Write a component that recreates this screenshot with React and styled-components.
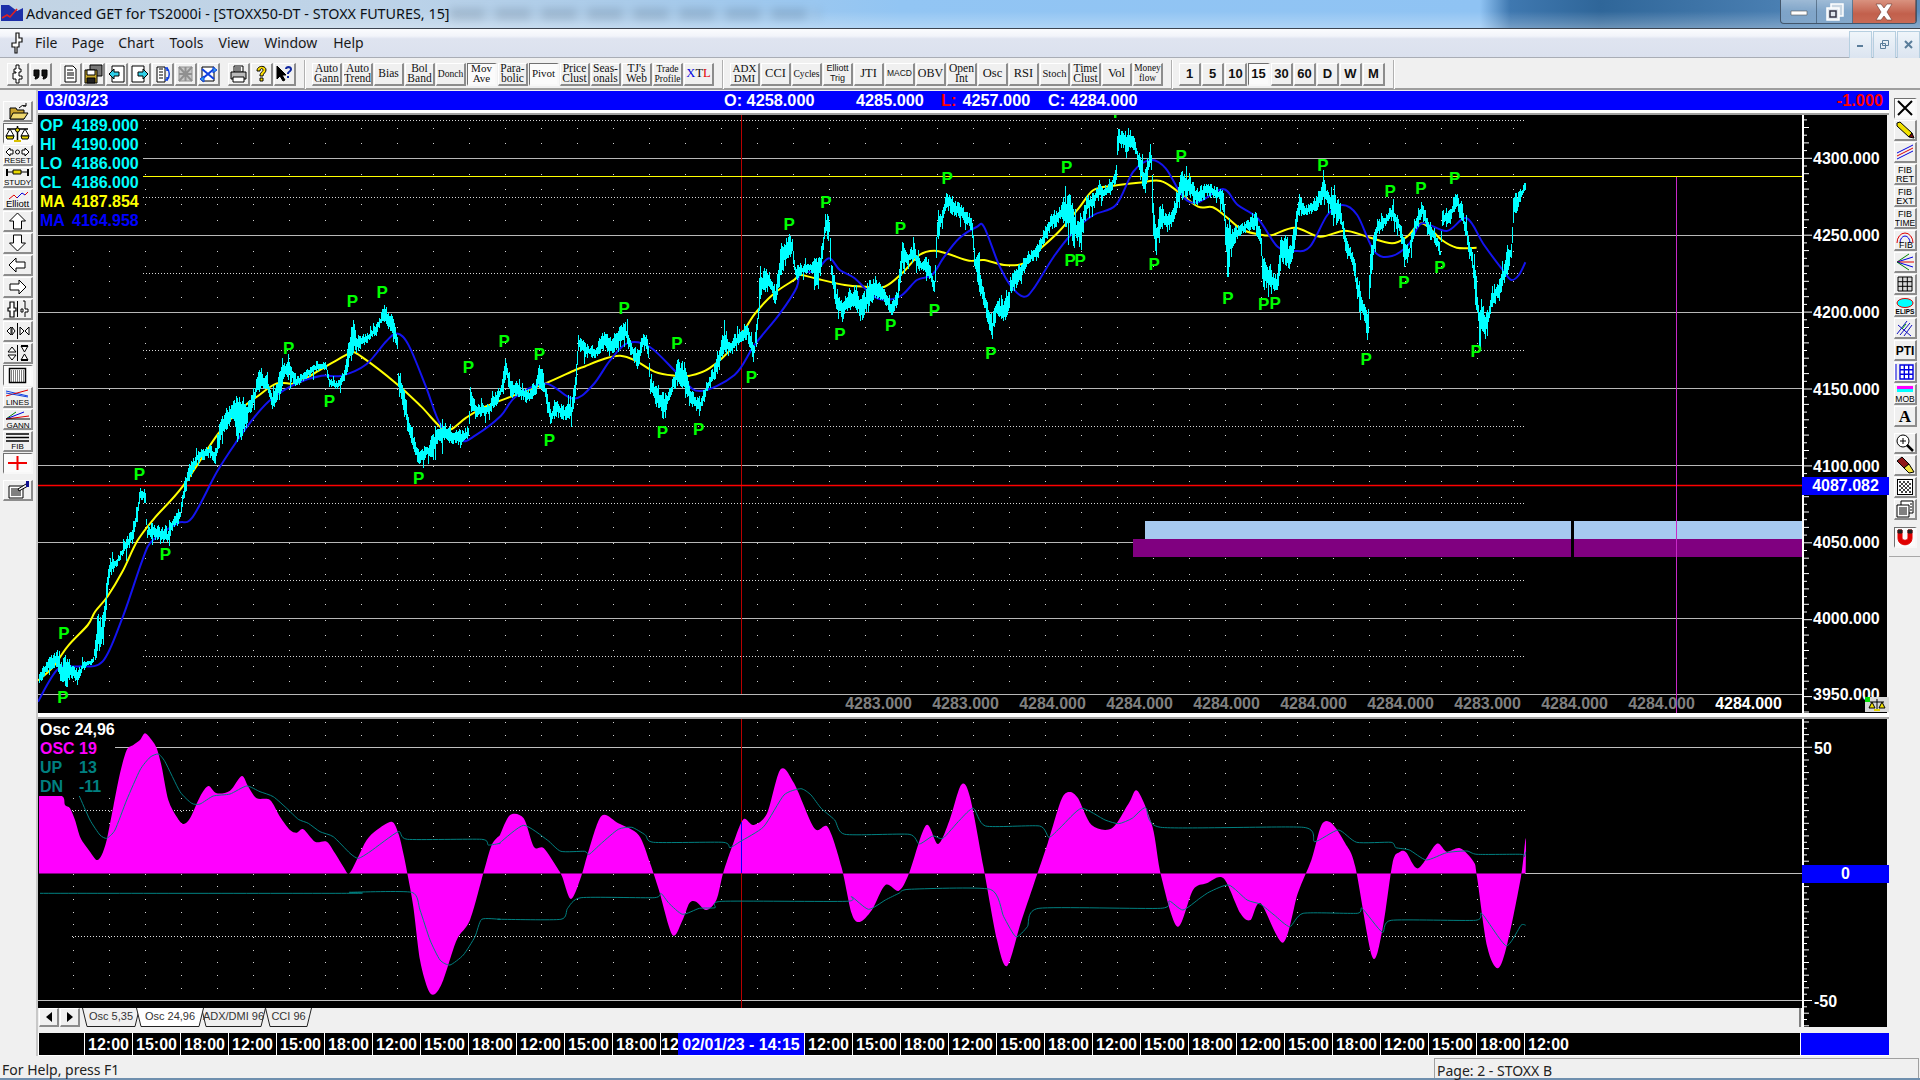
import React from "react";
import styled, { createGlobalStyle } from "styled-components";

/* ---------- digitised chart data (source px -> page coordinates) ---------- */
const fromA = (x) => 38 + x / 2.01;
const fromAy = (y) => 115 + y / 2.608;
const fromB = (x) => 800 + x / 2.01;
const fromBy = (y) => 115 + y / 3;
const fromOscA = ([x, y]) => [x / 3, 680 + y / 3];
const fromOscB = ([x, y]) => [500 + x / 1.479, 720 + y / 3];

const cyanA = [[0,1450,1490],[15,1425,1460],[30,1400,1445],[38,1390,1440],[44,1430,1480],[55,1405,1495],[65,1430,1470],[80,1445,1480],[90,1425,1450],[110,1415,1430],[118,1300,1420],[130,1300,1400],[136,1220,1300],[142,1150,1220],[155,1160,1185],[170,1120,1150],[190,1065,1120],[197,1020,1080],[205,965,1015],[215,975,1010],[218,1070,1110],[235,1060,1110],[260,1085,1120],[270,1040,1090],[285,1030,1060],[290,975,1020],[300,915,970],[320,875,910],[345,855,895],[355,870,920],[365,785,865],[390,740,800],[407,705,890],[415,745,830],[430,720,770],[445,655,720],[460,680,720],[470,730,770],[485,660,745],[495,640,690],[505,635,700],[520,680,710],[540,660,690],[560,640,670],[578,640,670],[585,680,715],[600,690,720],[615,660,700],[632,510,640],[640,570,620],[660,570,600],[680,540,570],[697,490,540],[712,520,590],[722,570,620],[723,650,720],[735,700,790],[745,790,850],[760,850,900],[767,870,925],[780,860,890],[792,830,915],[800,805,880],[815,790,860],[830,820,860],[848,815,870],[865,810,850],[868,685,780],[880,750,795],[905,750,785],[915,720,775],[930,700,740],[940,620,700],[950,680,740],[965,700,740],[985,715,755],[1000,690,730],[1005,650,720],[1012,655,720],[1020,700,760],[1030,760,820],[1040,735,790],[1060,760,800],[1072,740,800],[1080,665,740],[1085,570,620],[1100,590,635],[1120,600,640],[1135,555,620],[1150,575,625],[1180,535,600],[1195,590,640],[1205,610,675],[1215,565,610],[1225,570,620],[1230,670,740],[1245,700,770],[1258,720,805],[1270,710,740],[1285,625,710],[1300,640,730],[1310,710,760],[1330,730,790],[1345,690,720],[1360,640,700],[1378,545,630],[1390,590,630],[1410,555,600],[1425,540,590],[1438,600,650],[1447,500,540],[1450,385,500],[1470,410,450],[1482,450,505],[1493,330,420],[1505,320,400],[1515,310,360],[1522,390,440]];
const cyanB = [[0,445,490],[20,440,470],[35,415,535],[45,380,440],[50,295,360],[58,295,360],[62,430,500],[72,510,590],[85,560,625],[95,520,590],[110,510,590],[120,540,620],[135,500,600],[150,480,550],[165,510,560],[182,560,605],[195,520,580],[205,370,480],[215,410,450],[228,380,450],[240,430,470],[258,420,490],[270,500,555],[275,290,395],[285,280,330],[295,220,290],[310,250,310],[325,265,320],[345,310,350],[350,390,480],[360,440,540],[372,540,600],[385,600,680],[395,550,600],[410,550,630],[420,520,590],[422,480,545],[440,440,510],[460,410,450],[475,380,440],[490,340,390],[505,290,350],[525,265,320],[540,185,400],[548,240,410],[555,300,390],[565,280,410],[575,240,300],[590,230,280],[600,190,260],[612,210,260],[625,180,240],[635,145,200],[638,25,110],[650,55,100],[660,30,120],[672,70,110],[682,110,190],[692,150,245],[705,90,150],[710,265,390],[715,330,415],[725,260,350],[738,290,360],[750,260,320],[768,155,260],[780,165,250],[795,215,280],[815,200,250],[835,210,250],[850,225,290],[858,290,520],[868,330,410],[880,330,370],[900,310,350],[915,280,350],[925,340,400],[930,420,540],[945,450,530],[958,480,540],[965,350,470],[985,370,470],[995,300,400],[1002,225,310],[1015,270,300],[1030,260,300],[1052,185,270],[1062,230,280],[1072,200,340],[1085,260,320],[1095,350,420],[1110,400,460],[1120,490,560],[1135,570,640],[1141,600,705],[1145,370,530],[1160,310,370],[1180,290,330],[1190,260,320],[1205,320,360],[1215,350,470],[1222,400,440],[1235,300,360],[1250,255,310],[1262,310,370],[1275,340,390],[1287,400,430],[1290,280,340],[1305,280,340],[1317,220,280],[1330,260,340],[1340,330,390],[1350,390,480],[1356,450,545],[1365,555,680],[1380,590,670],[1390,515,580],[1405,490,560],[1420,400,480],[1430,385,430],[1433,240,325],[1445,225,270],[1458,200,225]];
const yellowA = [[0,1475],[30,1440],[60,1385],[100,1330],[115,1295],[140,1255],[170,1190],[200,1110],[235,1050],[290,970],[360,835],[400,775],[440,735],[480,700],[520,700],[560,670],[600,640],[630,620],[650,630],[720,700],[770,760],[810,815],[830,820],[860,790],[900,760],[960,730],[1020,700],[1080,665],[1100,655],[1140,635],[1170,628],[1200,640],[1240,670],[1280,680],[1310,680],[1350,660],[1400,600],[1440,520],[1480,465],[1520,430]];
const yellowB = [[0,480],[30,490],[90,510],[130,515],[170,515],[205,475],[240,420],[270,407],[300,418],[340,437],[370,435],[410,450],[450,445],[480,405],[520,350],[560,280],[590,225],[630,212],[680,203],[725,198],[760,230],[800,275],[830,277],[860,310],[890,345],[930,360],[950,360],[995,338],[1045,365],[1095,347],[1140,365],[1190,385],[1220,365],[1250,325],[1290,375],[1320,398],[1360,398]];
const blueA = [[0,1530],[40,1445],[80,1438],[130,1425],[170,1310],[210,1160],[230,1110],[280,1065],[310,1050],[360,930],[400,850],[440,780],[470,740],[520,700],[570,680],[610,680],[660,650],[700,590],[722,570],[745,600],[780,710],[810,810],[850,850],[880,835],[930,785],[960,735],[1020,700],[1075,740],[1115,705],[1150,640],[1185,595],[1230,605],[1290,680],[1330,720],[1400,678],[1440,600],[1490,520],[1525,450]];
const blueB = [[0,470],[30,470],[58,430],[80,465],[110,490],[155,550],[200,545],[235,495],[265,480],[290,425],[320,370],[355,336],[370,336],[400,450],[425,515],[450,545],[470,520],[510,425],[550,350],[590,300],[635,270],[670,170],[705,135],[735,160],[770,245],[800,262],[850,222],[880,270],[920,310],[960,395],[995,408],[1025,395],[1060,300],[1090,270],[1120,300],[1155,410],[1190,423],[1225,385],[1250,325],[1300,348],[1340,310],[1375,390],[1415,470],[1430,495],[1445,480],[1458,442]];
const pivotsA = [[52,1352],[50,1518],[204,936],[256,1145],[504,608],[586,745],[632,484],[692,462],[765,948],[865,658],[937,590],[1008,624],[1028,847],[1178,503],[1255,828],[1284,595],[1328,818],[1434,682],[1510,283]];
const pivotsB = [[52,262],[80,656],[202,340],[182,630],[296,188],[270,584],[384,714],[536,156],[543,436],[563,436],[712,446],[766,122],[860,548],[932,568],[955,565],[1051,150],[1138,732],[1186,228],[1248,218],[1316,188],[1214,500],[1286,456],[1359,708]];
const oscA = [[117,348],[185,348],[195,375],[210,385],[225,420],[240,470],[255,495],[270,515],[290,540],[305,525],[320,480],[340,380],[360,280],[380,210],[400,195],[420,180],[435,160],[455,180],[470,205],[485,260],[505,360],[530,410],[550,432],[570,415],[600,350],[625,318],[650,340],[690,332],[725,288],[745,320],[770,355],[810,360],[840,410],[870,450],[890,458],[910,448],[945,485],[980,485],[1005,520],[1030,560],[1048,580],[1075,530],[1100,480],[1130,450],[1175,425],[1195,460],[1210,520],[1222,580],[1240,680],[1260,840],[1285,930],[1305,942],[1330,900],[1370,780],[1410,720],[1450,580],[1475,495],[1500,465]];
const oscB = [[0,345],[15,285],[35,295],[50,380],[65,385],[85,445],[92,470],[105,537],[120,470],[130,400],[150,288],[175,310],[205,345],[222,430],[235,510],[255,645],[270,600],[280,550],[290,545],[305,570],[320,540],[330,460],[345,370],[360,298],[375,315],[395,280],[415,148],[435,190],[465,325],[485,322],[505,440],[520,580],[532,606],[550,570],[570,495],[590,512],[605,460],[630,316],[648,372],[665,300],[682,195],[695,230],[715,440],[735,660],[750,738],[770,610],[790,490],[810,370],[830,240],[842,216],[855,235],[875,315],[905,325],[930,250],[943,213],[965,320],[978,470],[1002,620],[1025,510],[1045,490],[1070,475],[1095,580],[1110,600],[1125,550],[1158,668],[1180,520],[1200,420],[1215,315],[1230,310],[1250,370],[1265,440],[1290,710],[1305,630],[1320,430],[1330,397],[1340,397],[1358,445],[1385,372],[1400,395],[1420,385],[1440,425],[1445,470],[1460,680],[1476,745],[1490,670],[1510,470],[1517,355],[1517,460]];
const upA = [[238,348],[270,420],[300,465],[320,475],[345,450],[380,360],[420,270],[450,232],[475,222],[495,245],[540,335],[575,370],[600,372],[640,348],[690,342],[740,318],[780,335],[820,350],[860,385],[895,418],[925,430],[960,455],[1000,470],[1050,520],[1075,535],[1110,515],[1195,455],[1222,478],[1445,478],[1465,495],[1500,490]];
const upB = [[0,368],[35,316],[70,360],[90,394],[125,394],[132,403],[150,370],[175,328],[195,322],[215,345],[227,367],[330,367],[340,383],[355,365],[390,320],[420,225],[445,206],[460,225],[475,265],[495,300],[510,343],[605,343],[620,372],[640,348],[655,355],[680,300],[700,265],[718,318],[798,318],[812,352],[830,320],[860,265],[895,300],[915,311],[935,295],[955,263],[977,322],[1188,322],[1205,365],[1240,330],[1267,367],[1318,367],[1325,383],[1345,390],[1370,420],[1400,398],[1430,393],[1445,403],[1510,403],[1515,410],[1517,395]];
const dnA = [[120,640],[1050,640],[1050,637],[1235,637],[1260,690],[1290,780],[1320,840],[1350,855],[1390,825],[1425,770],[1445,718],[1500,718]];
const dnB = [[0,598],[90,598],[100,565],[120,533],[228,533],[238,520],[250,550],[270,583],[295,565],[318,563],[328,544],[512,544],[520,530],[545,568],[570,540],[590,520],[605,508],[725,508],[745,590],[763,650],[780,620],[797,565],[977,565],[990,543],[1010,570],[1035,535],[1050,515],[1078,495],[1105,540],[1125,553],[1145,585],[1168,620],[1188,580],[1268,580],[1275,565],[1305,637],[1318,601],[1443,601],[1452,580],[1488,677],[1510,616],[1517,616]];

const rnd = (i) => { const v = Math.sin(i * 12.9898) * 43758.5453; return v - Math.floor(v); };
const f1 = (n) => n.toFixed(1);
/* a curve through the points (Catmull-Rom), k = how round the corners are */
const curve = (pts, k = 1) => {
  let d = `M${f1(pts[0][0])} ${f1(pts[0][1])}`;
  for (let i = 0; i < pts.length - 1; i++) {
    const p0 = pts[Math.max(0, i - 1)], p1 = pts[i], p2 = pts[i + 1], p3 = pts[Math.min(pts.length - 1, i + 2)];
    const a = [p1[0] + ((p2[0] - p0[0]) / 6) * k, p1[1] + ((p2[1] - p0[1]) / 6) * k];
    const b = [p2[0] - ((p3[0] - p1[0]) / 6) * k, p2[1] - ((p3[1] - p1[1]) / 6) * k];
    d += `C${f1(a[0])} ${f1(a[1])} ${f1(b[0])} ${f1(b[1])} ${f1(p2[0])} ${f1(p2[1])}`;
  }
  return d;
};
const linePts = (a, b) => [...a.map(([x, y]) => [fromA(x), fromAy(y)]), ...b.map(([x, y]) => [fromB(x), fromBy(y)])];
const oscPts = (a, b) => [...a.map(fromOscA), ...b.map(fromOscB)];

const barsPath = () => {
  const env = [...cyanA.map(([x, t, b]) => [fromA(x), fromAy(t), fromAy(b)]), ...cyanB.map(([x, t, b]) => [fromB(x), fromBy(t), fromBy(b)])];
  let d = "", k = 0;
  for (let x = 39; x <= env[env.length - 1][0]; x += 1) {
    while (k < env.length - 2 && env[k + 1][0] < x) k++;
    const [x0, t0, b0] = env[k];
    const [x1, t1, b1] = env[k + 1];
    const f = Math.min(1, Math.max(0, (x - x0) / Math.max(0.01, x1 - x0)));
    const t = t0 + (t1 - t0) * f;
    const b = b0 + (b1 - b0) * f;
    const s = b - t;
    let top = t + rnd(x) * s * 0.36;
    let bot = b - rnd(x + 7) * s * 0.36;
    if (rnd(x * 3 + 1) > 0.94) top -= 3 + rnd(x + 3) * 7;
    if (rnd(x * 5 + 2) > 0.94) bot += 3 + rnd(x + 5) * 7;
    d += `M${x + 0.5} ${Math.round(top)}V${Math.round(bot)}`;
  }
  return d;
};

const priceLineY = [158.5, 235.5, 312.5, 388.5, 465.5, 542.5, 618.5, 694.5];
const priceDotY = [120.5, 197.5, 273.5, 350.5, 426.5, 503.5, 580.5, 656.5];
const colX = Array.from({ length: 41 }, (_, i) => 73 + 36 * i);
const dots = (y0, step, y1) => {
  let d = "";
  colX.forEach((x) => { for (let y = y0; y < y1; y += step) d += `M${x} ${Math.round(y) + 0.5}h1`; });
  return d;
};

/* ---------- global ---------- */
const Global = createGlobalStyle`
  html, body { margin: 0; padding: 0; background: #f0f0f0; }
  * { box-sizing: border-box; }
`;

const Screen = styled.div`
  width: 1920px; height: 1080px; display: flex; flex-direction: column;
  overflow: hidden; background: #f0f0f0; font-family: "Liberation Sans", Arial, sans-serif;
`;

/* ---------- title bar ---------- */
const TitleBar = styled.header`
  position: relative; height: 29px; flex: none; display: flex; align-items: flex-start;
  border-bottom: 1px solid #3c4450;
  background: linear-gradient(90deg, #c3d4e4 0, #bdd3e8 380px, #a9cbea 640px, #92c5f3 900px, #8fc3f3 1480px, #3f78b0 1510px, #2f6699 1600px, #4a7fb2 1780px, #5c8cba 1920px);
`;
const TitleGlow = styled.div`
  position: absolute; inset: 0; background: linear-gradient(180deg, rgba(255,255,255,0) 40%, rgba(255,255,255,.28) 100%);
`;
const TitleSmear = styled.div`
  position: absolute; left: 450px; top: 8px; width: 370px; height: 12px; filter: blur(4px); opacity: .24;
  background: repeating-linear-gradient(90deg, #56697c 0 34px, #a3bdd4 34px 46px);
`;
const AppLogo = styled.svg`
  position: relative; width: 22px; height: 18px; margin: 4px 3px 0 1px;
`;
const TitleText = styled.div`
  position: relative; font: 14.35px/28px "Noto Sans", sans-serif; color: #0c1015; white-space: nowrap;
`;
const WindowButtons = styled.div`
  position: relative; margin-left: auto; margin-right: 3px; display: flex; height: 24px;
  border: 1px solid #42566b; border-top: 0; border-radius: 0 0 4px 4px; overflow: hidden;
`;
const WinBtn = styled.div`
  width: ${(p) => p.$w}px; display: flex; align-items: center; justify-content: center;
  background: ${(p) => p.$close ? "linear-gradient(180deg,#d9927f,#c2604c 60%,#c96a55)" : "linear-gradient(180deg,rgba(255,255,255,.45),rgba(255,255,255,.12))"};
  border-right: 1px solid rgba(40,60,80,.5);
`;

/* ---------- menu ---------- */
const MenuBar = styled.nav`
  height: 29px; flex: none; display: flex; align-items: center; padding-left: 10px;
  background: linear-gradient(180deg, #fbfcfe 0, #f2f4fa 25%, #dfe4f0 35%, #dbe1ee 100%);
  border-bottom: 1px solid #a9adb5;
`;
const MenuLogo = styled.svg`
  margin-right: 10px; flex: none;
`;
const MenuItem = styled.span`
  font: 14px/28px "Noto Sans", sans-serif; color: #1a1a1a; margin-right: ${(p) => p.$gap}px;
`;
const MdiGroup = styled.div`
  margin-left: auto; display: flex; gap: 1px; height: 28px; margin-top: 3px;
`;
const MdiBtn = styled.div`
  width: 23px; display: flex; align-items: center; justify-content: center;
  border: 1px solid #b6cfe0; background: linear-gradient(180deg,#eff5fa,#dbe4f0);
`;

/* ---------- top toolbar ---------- */
const ToolBar = styled.div`
  height: 32px; flex: none; display: flex; align-items: center; gap: 8px; padding: 2px 0 0 7px;
  background: #f0f0f0; border-bottom: 2px solid #9e9e9e;
`;
const ToolGroup = styled.div`
  display: flex; gap: 1px;
`;
const Sep = styled.i`
  width: 2px; height: 29px; margin-right: -2px; border-left: 1px solid #b0b0b0; border-right: 1px solid #fff;
`;
const RaisedBtn = styled.div`
  display: flex; align-items: center; justify-content: center; flex: none; padding: 0; overflow: hidden;
  background: ${(p) => (p.$on ? "#fbfbfb" : "#f0f0f0")};
  border-style: solid; border-width: 1px 2px 2px 1px;
  border-color: ${(p) => (p.$on ? "#707070 #f8f8f8 #f8f8f8 #707070" : "#ffffff #8c8c8c #8c8c8c #ffffff")};
`;
const IconBtn = styled(RaisedBtn)`
  width: 22px; height: 23px;
`;
const TextBtn = styled(RaisedBtn)`
  width: 30px; height: 23px; white-space: pre-line; text-align: center; color: #111;
  font: ${(p) => p.$size || 11.5}px/9.5px ${(p) => (p.$sans ? '"Liberation Sans", sans-serif' : '"Liberation Serif", serif')};
`;
const NumBtn = styled(RaisedBtn)`
  width: 22px; height: 23px; font: bold 13px/1 "Liberation Sans", sans-serif; color: #111;
`;
const RedL = styled.span`color: #e00000;`;
const BlueX = styled.span`color: #0000e0;`;

/* ---------- workspace ---------- */
const Workspace = styled.div`
  flex: 1; display: flex; min-height: 0;
`;
const LeftBar = styled.aside`
  width: 38px; flex: none; display: flex; flex-direction: column; padding: 11px 0 0 3px; gap: 1px;
  border-right: 2px solid #c8c8c8;
`;
const RightBar = styled.aside`
  width: 31px; flex: none; display: flex; flex-direction: column; padding: 8px 0 0 5px; gap: 1px;
`;
const SideBtn = styled(RaisedBtn)`
  width: ${(p) => p.$w}px; height: 21px; margin-top: ${(p) => p.$mt || 0}px;
`;
const RightRule = styled.div`
  height: 1px; width: 31px; margin: 7px 0 0 -5px; background: #a8a8a8;
`;
const Main = styled.main`
  width: 1851px; flex: none; display: flex; flex-direction: column; padding-top: 1px;
`;

const QuoteBar = styled.div`
  height: 19px; flex: none; background: #0000ff; color: #fff; display: grid;
  grid-template-columns: 686px 132px 85px 107px 1fr auto; align-items: center;
  font: bold 16.3px/19px "Liberation Sans", sans-serif; padding-right: 6px;
`;
const QuoteDate = styled.span`padding-left: 7px;`;
const QuoteRed = styled.span`color: #ff0000;`;
const QuoteValue = styled.span`margin-left: 6px;`;

const TopRule = styled.div`
  height: 5px; flex: none; border-bottom: 2px solid #a0a0a0; background: #fff;
`;
const PriceRow = styled.section`
  display: flex; height: 598px; flex: none;
`;
const ChartPane = styled.div`
  position: relative; width: 1764px; height: ${(p) => p.$h}px; background: #000; flex: none; overflow: hidden;
`;
const ChartSvg = styled.svg`
  display: block; position: absolute; inset: 0; width: 100%; height: 100%;
`;
const AxisPane = styled.div`
  position: relative; width: 85px; height: ${(p) => p.$h}px; background: #000; flex: none;
`;
const AxisLabel = styled.text`
  font: bold 16px "Liberation Sans", sans-serif; fill: #fff;
`;
const PivotMark = styled.text`
  font: bold 17px "Liberation Sans", sans-serif; fill: #00ff00; text-anchor: middle;
`;
const Legend = styled.div`
  position: absolute; left: 0; top: 0; width: ${(p) => p.$w}px; height: ${(p) => p.$h}px; background: #000;
  padding: 1px 0 0 2px; font: bold 16px/19px "Liberation Sans", sans-serif;
`;
const LegendRow = styled.div`
  display: grid; grid-template-columns: ${(p) => p.$col}px auto; color: ${(p) => p.$c}; white-space: nowrap;
`;
const ValueStrip = styled.div`
  position: absolute; left: 797px; bottom: 0; height: 19px; display: flex;
`;
const StripValue = styled.span`
  width: 87px; text-align: center; font: bold 16px/19px "Liberation Sans", sans-serif;
  color: ${(p) => (p.$now ? "#fff" : "#808080")};
`;
const PriceTag = styled.div`
  position: absolute; left: 0; width: 87px; height: 18px; top: ${(p) => p.$top}px; background: #0000ff; color: #fff;
  display: flex; align-items: center; justify-content: center; font: bold 16px/18px "Liberation Sans", sans-serif;
`;
const CornerBadge = styled.svg`
  position: absolute; right: -2px; bottom: 1px; width: 24px; height: 15px; background: #d8d8d8;
`;
const PaneRule = styled.div`
  height: 6px; flex: none; border-bottom: 2px solid #a8a8a8; background: #fff;
`;
const OscRow = styled.section`
  display: flex; height: 308px; flex: none;
`;
const OscColumn = styled.div`
  width: 1764px; flex: none; display: flex; flex-direction: column;
`;
const TabRow = styled.div`
  height: 19px; flex: none; display: flex; padding-left: 1px; background: #f0f0f0; border-right: 2px solid #808080; margin-right: 1px;
`;
const PageArrow = styled(RaisedBtn)`
  width: 20px; height: 19px; margin-right: 1px;
`;
const Tab = styled.div`
  position: relative; width: ${(p) => p.$w}px; margin-left: ${(p) => p.$ml}px; height: 19px; flex: none;
  display: flex; align-items: center; justify-content: center; padding-bottom: 4px;
  font: 11px/14px "Liberation Sans", sans-serif; color: #333; z-index: ${(p) => (p.$on ? 2 : 1)};
`;
const TabShape = styled.svg`
  position: absolute; inset: 0; width: 100%; height: 100%;
`;
const TabLabel = styled.span`position: relative;`;

const TimeRow = styled.div`
  height: 23px; flex: none; display: flex; margin-top: 6px; background: #fff;
`;
const TimeAxis = styled.div`
  width: 1761px; height: 22px; flex: none; display: flex; background: #000; margin-left: 1px;
  font: bold 16px/23px "Liberation Sans", sans-serif; color: #fff;
`;
const TimeCell = styled.span`
  width: ${(p) => p.$w}px; flex: none; overflow: hidden; white-space: nowrap; text-align: center;
  border-left: ${(p) => (p.$plain ? 0 : 1)}px solid #fff;
`;
const TimeFocus = styled.span`
  width: 126px; flex: none; background: #0000ff; text-align: center; white-space: nowrap;
`;
const TimeEnd = styled.div`
  width: 88px; height: 22px; flex: none; background: #0000ff; margin-left: 1px;
`;

/* ---------- status ---------- */
const StatusBar = styled.footer`
  height: 24px; flex: none; display: flex; font: 14px/24px "Noto Sans", sans-serif; color: #222;
  border-bottom: 2px solid #6f8fae; padding-top: 2px;
`;
const StatusMain = styled.div`
  width: 1434px; flex: none; padding-left: 2px;
`;
const StatusPane = styled.div`
  flex: 1; padding-left: 2px; border: 1px solid #a0a0a0; border-width: 1px 1px 0 1px; margin-right: 1px;
`;

/* ---------- icon drawing ---------- */
const Ico = styled.svg`
  display: block; flex: none;
`;
const IcoText = styled.text`
  font: ${(p) => (p.$bold ? "bold " : "")}${(p) => p.$s || 8}px "${(p) => p.$f || "Liberation Sans"}", sans-serif; fill: ${(p) => p.$c || "#000"}; text-anchor: middle;
`;

const Svg = ({ w = 27, h = 18, children }) => (
  <Ico width={w} height={h} viewBox={`0 0 ${w} ${h}`} fill="none" stroke="#000" strokeWidth="1">{children}</Ico>
);

const I = {
  pin: <Svg w={19} h={20}><path d="M8 1h3v4h2v3h-2l0 4h3v3h-3v4H8v-4H5v-6h3V8H6V5h2z" fill="#fff" /></Svg>,
  quote: <Svg w={19} h={20}><path d="M3 6h5v5c0 3-2 4-4 4l1-3H3zM11 6h5v5c0 3-2 4-4 4l1-3h-2z" fill="#111" /></Svg>,
  page: <Svg w={19} h={20}><path d="M4 2h8l3 3v13H4z" fill="#fff" /><path d="M6 6h6M6 9h7M6 11h7M6 14h7" /></Svg>,
  save: <Svg w={19} h={20}><path d="M6 1h12v11H6z" fill="#777" /><path d="M1 6h12v13H1z" fill="#c9a92a" /><path d="M3 6h8v5H3z" fill="#fff" /><path d="M3 14h8v5H3z" fill="#222" /></Svg>,
  pgBack: <Svg w={19} h={20}><path d="M5 2h12v16H5z" fill="#fff" /><path d="M8 10l5-5v3h5v4h-5v3z" transform="translate(-6 0)" fill="#30d0e8" /></Svg>,
  pgNext: <Svg w={19} h={20}><path d="M2 2h12v16H2z" fill="#fff" /><path d="M11 10l-5-5v3H1v4h5v3z" transform="translate(7 0)" fill="#30d0e8" /></Svg>,
  flip: <Svg w={19} h={20}><path d="M4 3h8v15H4z" fill="#fff" /><path d="M14 4c3 3 3 9 0 12M14 4v3M12 4h3M14 16v-3M12 16h3" stroke="#1040e0" strokeWidth="1.5" /><path d="M6 5h4M6 8h4M6 11h4M6 14h4" /></Svg>,
  ghost: <Svg w={19} h={20}><path d="M3 3h13v14H3z" fill="#c8c8c8" stroke="#909090" /><path d="M3 3l13 14M16 3L3 17M9.5 3v14M3 10h13" stroke="#909090" strokeWidth="2" /></Svg>,
  cross: <Svg w={19} h={20}><path d="M3 3h12v14H3z" fill="#fff" /><path d="M3 5l12 10M15 5L3 15" stroke="#1040e0" strokeWidth="2" /><path d="M14 3l4 3-4 3zM5 12l-4 3 4 3z" fill="#30a0e8" stroke="#1040e0" /></Svg>,
  print: <Svg w={19} h={20}><path d="M5 2h9v6H5z" fill="#fff" /><path d="M2 8h15v7H2z" fill="#bbb" /><path d="M4 13h11v5H4z" fill="#fff" /><path d="M6 4h6M6 6h6" /></Svg>,
  help: <Svg w={19} h={20}><path d="M5 7c0-6 9-6 9-1 0 3-3 3-3 6H8c0-4 3-4 3-6 0-2-3-2-3 1z" fill="#ffe000" /><path d="M8 14h3v3H8z" fill="#ffe000" /></Svg>,
  helpArrow: <Svg w={19} h={20}><path d="M2 2v13l3-3 3 5 2-1-3-5h4z" fill="#000" /><path d="M10 5c0-4 7-4 7 0 0 3-3 3-3 5h-2c0-3 3-3 3-5 0-1-3-1-3 0z" fill="#1028a0" stroke="none" /><path d="M12 12h2v2h-2z" fill="#1028a0" stroke="none" /></Svg>,

  open: <Svg><path d="M6 6h6l1 2h7v9H6z" fill="#c9a32e" /><path d="M6 17l3-6h15l-4 6z" fill="#eed76f" /><path d="M15 6q3-4 7-2M22 1v3h-3" /></Svg>,
  scales: <Svg><path d="M13.5 2v14M3 5h21" strokeWidth="1.5" /><path d="M10 17h7" strokeWidth="2" stroke="#d8c000" /><path d="M6 5l-4 7h8zM21 5l-4 7h8z" fill="#fff" /><path d="M2 12h8l-1 3H3zM17 12h8l-1 3h-6z" fill="#e8d800" /><circle cx="13.5" cy="6" r="2" fill="#e8d800" /></Svg>,
  reset: <Svg><path d="M2 6l4-4v2h3v4H6v2zM25 6l-4-4v2h-3v4h3v2z" fill="#fff" /><circle cx="13.5" cy="6" r="2" fill="#fff" /><IcoText x="13.5" y="16.5" stroke="none">RESET</IcoText></Svg>,
  study: <Svg><path d="M3 1v7M24 1v7" strokeWidth="2" /><path d="M3 4h21" strokeWidth="1" /><path d="M9 2h8v4H9z" fill="#e8d800" /><IcoText x="13.5" y="16.5" stroke="none">STUDY</IcoText></Svg>,
  elliott: <Svg><path d="M5 9l5-4 3 3" stroke="#e00000" /><path d="M13 8l5-5 3 2" stroke="#0000e0" /><path d="M21 5l3-3" stroke="#e00000" /><IcoText x="13.5" y="17" $s={9.5} stroke="none">Elliott</IcoText></Svg>,
  up: <Svg><path d="M13.5 1l8 8h-4v8h-8V9h-4z" fill="#fff" /></Svg>,
  down: <Svg><path d="M13.5 17l8-8h-4V1h-8v8h-4z" fill="#fff" /></Svg>,
  left: <Svg><path d="M5 9l7-7v4h9v6h-9v4z" fill="#fff" /></Svg>,
  right: <Svg><path d="M22 9l-7-7v4H6v6h9v4z" fill="#fff" /></Svg>,
  split: <Svg><path d="M6 2h4v6h2v3h-2v6H6v-6H4V8h2z" fill="#fff" strokeWidth="1.2" /><path d="M13.5 1v16" /><path d="M19 1h2v8h3v3h-3v5M19 9v3h-2V9z" fill="#fff" /></Svg>,
  hsplit: <Svg><path d="M3 9l4-4v8zM11 9L8 5v8z" fill="#fff" /><path d="M13.5 1v16" /><path d="M16 5v8l4-4zM25 5v8l-4-4z" fill="#fff" /></Svg>,
  vsplit: <Svg><path d="M4 8l4-5 4 5zM4 11l4 5 4-5z" fill="#fff" /><path d="M13.5 1v16" /><path d="M17 2h7l-3.5 6zM17 16h7l-3.5-6z" fill="#fff" /><path d="M17 2h7M17 16h7" strokeWidth="2" /></Svg>,
  dots: <Svg><rect x="5.5" y="2.5" width="16" height="14" fill="#fff" strokeWidth="1.5" /><path d="M7 5h13M7 7h13M7 9h13M7 11h13M7 13h13M7 15h13" strokeDasharray="1 1" /></Svg>,
  lines: <Svg><path d="M2 3l22 5" stroke="#1040e0" /><path d="M2 8l22-6" stroke="#e00000" /><path d="M2 5l22 4" stroke="#1040e0" /><IcoText x="13.5" y="17" stroke="none">LINES</IcoText></Svg>,
  gann: <Svg><path d="M2 9L12 2" stroke="#008000" /><path d="M2 9L20 2" stroke="#0000e0" /><path d="M2 9l23-3" stroke="#e00000" /><path d="M2 9h24" stroke="#000" /><IcoText x="14" y="17.5" stroke="none">GANN</IcoText></Svg>,
  fib: <Svg><path d="M2 2h23M2 5.5h23M2 9h23" strokeWidth="1.3" /><IcoText x="13.5" y="17" stroke="none">FIB</IcoText></Svg>,
  redCross: <Svg><path d="M13.5 2v14M4 9h19" stroke="#f00000" strokeWidth="2" /></Svg>,
  clip: <Svg><path d="M5 5h14v12H5z" fill="#fff" /><path d="M7 8h10M7 10h10M7 12h10M7 14h10" /><path d="M14 8l8-5 2 2-9 5z" fill="#f0f0f0" /><path d="M22 0h3v6h-3z" fill="#101090" stroke="none" /></Svg>,
  bx: <Svg w={20} h={18}><path d="M3 2l14 14M17 2L3 16" strokeWidth="2" /></Svg>,
  pencil: <Svg w={20} h={18}><path d="M2 2l3-1 12 11-3 4L2 5z" fill="#f0e000" /><path d="M14 16l3-4 2 5z" fill="#801010" /></Svg>,
  para: <Svg w={20} h={18}><path d="M2 10L18 2" stroke="#0000e0" /><path d="M2 13L18 5" stroke="#e00000" /><path d="M2 16L18 8" stroke="#0000e0" /></Svg>,
  fibRet: <Svg w={20} h={18}><IcoText x="10" y="8" $s={9} stroke="none">FIB</IcoText><IcoText x="10" y="17" $s={9} stroke="none">RET</IcoText></Svg>,
  fibExt: <Svg w={20} h={18}><IcoText x="10" y="8" $s={9} stroke="none">FIB</IcoText><IcoText x="10" y="17" $s={9} stroke="none">EXT</IcoText></Svg>,
  fibTime: <Svg w={20} h={18}><IcoText x="10" y="8" $s={9} stroke="none">FIB</IcoText><IcoText x="10" y="17" $s={8.5} stroke="none">TIME</IcoText></Svg>,
  fibArc: <Svg w={20} h={18}><path d="M2 12a8 10 0 0 1 16 0" stroke="#e00000" /><path d="M5 12a5 7 0 0 1 10 0" stroke="#0000e0" /><IcoText x="11" y="16.5" $s={9} stroke="none">FIB</IcoText></Svg>,
  fan: <Svg w={20} h={18}><path d="M2 9L14 1" stroke="#008000" /><path d="M2 9l16-5" stroke="#0000e0" /><path d="M2 9h17" stroke="#e00000" /><path d="M2 9l16 5" stroke="#0000e0" /><path d="M2 9l12 8" stroke="#008000" /></Svg>,
  grid: <Svg w={20} h={18}><path d="M3 2h14v14H3z" fill="#d8d8d8" /><path d="M3 6.7h14M3 11.3h14M7.7 2v14M12.3 2v14" /></Svg>,
  ellipse: <Svg w={20} h={18}><ellipse cx="10" cy="6" rx="8" ry="4.5" fill="#00ffff" stroke="#e00000" /><IcoText x="10" y="16.5" $s={6.5} $bold stroke="none">ELIPS</IcoText></Svg>,
  diag: <Svg w={20} h={18}><path d="M2 15L12 2M5 16L15 4M9 17l8-11" stroke="#1010c0" /><path d="M3 6l13 11" stroke="#1010c0" /><path d="M7 10l4-5" stroke="#00a000" /></Svg>,
  pti: <Svg w={20} h={18}><IcoText x="10" y="14" $s={12} $bold stroke="none">PTI</IcoText></Svg>,
  blueGrid: <Svg w={20} h={18}><path d="M5 2h13v14H5z" fill="#fff" stroke="#0000e0" strokeWidth="1.4" /><path d="M5 6.7h13M5 11.3h13M9.3 2v14M13.7 2v14" stroke="#0000e0" strokeWidth="1.4" /><path d="M1 1v16" stroke="#0000e0" /></Svg>,
  mob: <Svg w={20} h={18}><path d="M2 1h16v3H2z" fill="#ff00ff" stroke="none" /><path d="M2 4h16v3H2z" fill="#00ffff" stroke="none" /><IcoText x="10" y="16.5" $s={8.5} stroke="none">MOB</IcoText></Svg>,
  bigA: <Svg w={20} h={18}><IcoText x="10" y="15" $s={17} $bold $f="Liberation Serif" stroke="none">A</IcoText></Svg>,
  zoom: <Svg w={20} h={18}><circle cx="8" cy="7" r="6" fill="#fff" /><path d="M12 11l6 6" strokeWidth="2.5" /><path d="M8 4v6M5 7h6" /></Svg>,
  eraser: <Svg w={20} h={18}><path d="M2 5l5-4 7 7-5 4z" fill="#901818" /><path d="M9 12l5-4 5 8-5 1z" fill="#f0e040" /></Svg>,
  checker: <Svg w={20} h={18}><rect x="2.5" y="1.5" width="15" height="15" fill="#fff" /><path d="M4 3h2v2H4zM8 3h2v2H8zM12 3h2v2h-2zM6 5h2v2H6zM10 5h2v2h-2zM14 5h2v2h-2zM4 7h2v2H4zM8 7h2v2H8zM12 7h2v2h-2zM6 9h2v2H6zM10 9h2v2h-2zM14 9h2v2h-2zM4 11h2v2H4zM8 11h2v2H8zM12 11h2v2h-2zM6 13h2v2H6zM10 13h2v2h-2zM14 13h2v2h-2z" fill="#444" stroke="none" /></Svg>,
  copy: <Svg w={20} h={18}><path d="M6 1h12v12H6z" fill="#fff" /><path d="M2 5h12v12H2z" fill="#fff" /><path d="M4 8h8M4 10h8M4 12h8M4 14h8M15 4h2M15 7h2M15 10h2" /></Svg>,
  magnet: <Svg w={20} h={18}><path d="M3 2h4v8c0 3 6 3 6 0V2h4v8c0 9-14 9-14 0z" fill="#e00000" stroke="#e00000" /><path d="M3 2h4v3H3zM13 2h4v3h-4z" fill="#202020" stroke="#202020" /></Svg>,
};

const topIcons = [["pin", "quote"], ["page", "save", "pgBack", "pgNext", "flip", "ghost", "cross"], ["print", "help", "helpArrow"]];
const studyA = [["Auto\nGann"], ["Auto\nTrend"], ["Bias"], ["Bol\nBand"], ["Donch", 0, 9.6], ["Mov\nAve", 0, 11, 1], ["Para-\nbolic"], ["Pivot", 0, 11, 1], ["Price\nClust"], ["Seas-\nonals"], ["TJ's\nWeb"], ["Trade\nProfile", 0, 9.6]];
const studyB = [["ADX\nDMI", 0, 11], ["CCI", 0, 12.5], ["Cycles", 0, 9.6], ["Elliott\nTrig", 1, 9], ["JTI", 0, 12.5], ["MACD", 1, 8.5], ["OBV", 0, 12], ["Open\nInt"], ["Osc", 0, 12.5], ["RSI", 0, 12.5], ["Stoch", 0, 10.5], ["Time\nClust"], ["Vol", 0, 12.5], ["Money\nflow", 0, 9.4]];
const periods = ["1", "5", "10", "15", "30", "60", "D", "W", "M"];
const leftTools = ["open", "scales", "reset", "study", "elliott", "up", "down", "left", "right", "split", "hsplit", "vsplit", "dots", "lines", "gann", "fib", "redCross"];
const rightTools = ["bx", "pencil", "para", "fibRet", "fibExt", "fibTime", "fibArc", "fan", "grid", "ellipse", "diag", "pti", "blueGrid", "mob", "bigA"];
const rightTools2 = ["eraser", "checker", "copy"];
const stripValues = ["4283.000", "4283.000", "4284.000", "4284.000", "4284.000", "4284.000", "4284.000", "4283.000", "4284.000", "4284.000", "4284.000"];
const legendPrice = [["OP", "4189.000", "#00ffff"], ["HI", "4190.000", "#00ffff"], ["LO", "4186.000", "#00ffff"], ["CL", "4186.000", "#00ffff"], ["MA", "4187.854", "#ffff00"], ["MA", "4164.958", "#0000ff"]];
const legendOsc = [["OSC", "19", "#ff00ff"], ["UP", "13", "#008080"], ["DN", "-11", "#008080"]];
const priceAxis = [["4300.000", 158.3], ["4250.000", 235.2], ["4200.000", 312.1], ["4150.000", 388.6], ["4100.000", 465.6], ["4050.000", 542], ["4000.000", 618.3], ["3950.000", 694.3]];
const tabs = [["Osc 5,35", 58, 1, 0], ["Osc 24,96", 68, -4, 1], ["ADX/DMI 96", 65, -3, 0], ["CCI 96", 47, -1, 0]];
const timesHead = ["12:00", "15:00", "18:00", "12:00", "15:00", "18:00", "12:00", "15:00", "18:00", "12:00", "15:00", "18:00"];
const timesTail = [...timesHead, "12:00", "15:00", "18:00", "12:00"];

const priceGridDots = dots(158.3 - 15.38 * 2, 15.38, 690);
const oscGridDots = dots(747.3 - 12.65 * 2, 12.65, 1000);
const cyanD = barsPath();
const yellowD = curve(linePts(yellowA, yellowB));
const blueD = curve(linePts(blueA, blueB));
const oscSource = oscPts(oscA, oscB);
const oscLast = oscSource[oscSource.length - 1];
const oscD = `M39 873.5L39 ${f1(oscSource[0][1])}${curve(oscSource, 0.9).replace(/^M[^C]*/, `L${f1(oscSource[0][0])} ${f1(oscSource[0][1])}`)}L${f1(oscLast[0])} 873.5Z`;
const upD = curve(oscPts(upA, upB), 0.6);
const dnD = curve(oscPts(dnA, dnB), 0.6);
const pivots = [...pivotsA.map(([x, y]) => [fromA(x), fromAy(y)]), ...pivotsB.map(([x, y]) => [fromB(x), fromBy(y)])];

let tickD = "";
for (let y = 158.3 - 7.69 * 5, i = -5; y < 712; y += 7.69, i++) tickD += `M2 ${f1(y - 115)}h${i % 10 === 0 ? 8 : i % 2 === 0 ? 5 : 3}`;
let oscTickD = "";
for (let y = 747.3 - 6.33 * 4, i = -4; y < 1027; y += 6.33, i++) oscTickD += `M2 ${f1(y - 719)}h${i % 20 === 0 ? 8 : i % 2 === 0 ? 5 : 3}`;

const Scales = () => (
  <CornerBadge viewBox="0 0 24 15" fill="none" stroke="#000">
    <path d="M0 0h5v5H0z" fill="#00e000" stroke="none" />
    <path d="M12 2v11M5 5h14" />
    <path d="M7 5l-3 6h6zM17 5l-3 6h6z" fill="#f0e000" />
    <path d="M9 13h6" stroke="#e8d800" strokeWidth="2" />
  </CornerBadge>
);

export default function App() {
  return (
    <Screen>
      <Global />
      <TitleBar>
        <TitleGlow />
        <TitleSmear />
        <AppLogo viewBox="0 0 22 18">
          <path d="M0 1h8l8 6 6-3v13H0z" fill="#1c2fa8" />
          <path d="M1 14l5-3 3 2 7-8" fill="none" stroke="#e02020" strokeWidth="1.6" />
        </AppLogo>
        <TitleText>Advanced GET for TS2000i - [STOXX50-DT - STOXX FUTURES, 15]</TitleText>
        <WindowButtons>
          <WinBtn $w={36}><Ico width="18" height="8" viewBox="0 0 18 8"><path d="M1 3h16v4H1z" fill="#fff" stroke="#555" strokeWidth=".6" /></Ico></WinBtn>
          <WinBtn $w={36}><Ico width="20" height="20" viewBox="0 0 20 20" fill="none"><path d="M6 2h12v12H6z" fill="#c9d6e2" stroke="#fff" strokeWidth="1.5" /><path d="M2 6h12v12H2z" fill="#dfe6ee" stroke="#fff" strokeWidth="1.5" /><path d="M5 9h6v6H5z" stroke="#334" strokeWidth="1.5" /></Ico></WinBtn>
          <WinBtn $w={63} $close><Ico width="20" height="18" viewBox="0 0 20 18"><path d="M2 1h5l3 4 3-4h5l-5 8 5 8h-5l-3-4-3 4H2l5-8z" fill="#fff" stroke="#6a3a30" strokeWidth=".6" /></Ico></WinBtn>
        </WindowButtons>
      </TitleBar>

      <MenuBar>
        <MenuLogo width="15" height="22" viewBox="0 0 15 22" fill="#fff" stroke="#111" strokeWidth="1.2"><path d="M6 1h3v5h3v4H9v5h-2v6H5v-6H2v-4h4z" /></MenuLogo>
        <MenuItem $gap={14}>File</MenuItem>
        <MenuItem $gap={14}>Page</MenuItem>
        <MenuItem $gap={15}>Chart</MenuItem>
        <MenuItem $gap={15}>Tools</MenuItem>
        <MenuItem $gap={15}>View</MenuItem>
        <MenuItem $gap={16}>Window</MenuItem>
        <MenuItem $gap={0}>Help</MenuItem>
        <MdiGroup>
          <MdiBtn><Ico width="9" height="9" viewBox="0 0 9 9"><path d="M1 5h6v2H1z" fill="#5a7d9a" /></Ico></MdiBtn>
          <MdiBtn><Ico width="11" height="11" viewBox="0 0 11 11" fill="none" stroke="#5a7d9a"><path d="M3.5 1.5h6v5h-6zM1.5 4.5h5v5h-5z" /></Ico></MdiBtn>
          <MdiBtn><Ico width="11" height="11" viewBox="0 0 11 11" stroke="#5a7d9a" strokeWidth="2"><path d="M2 2l7 7M9 2l-7 7" /></Ico></MdiBtn>
        </MdiGroup>
      </MenuBar>

      <ToolBar>
        {topIcons.map((group, g) => (
          <ToolGroup key={g}>
            {group.map((name) => <IconBtn key={name}>{I[name]}</IconBtn>)}
          </ToolGroup>
        ))}
        <Sep />
        <ToolGroup>
          {studyA.map(([t, sans, size, on]) => <TextBtn key={t} $sans={sans} $size={size} $on={on}>{t}</TextBtn>)}
          <TextBtn $size={12.5}><span><BlueX>X</BlueX>T<RedL>L</RedL></span></TextBtn>
        </ToolGroup>
        <Sep />
        <ToolGroup>
          {studyB.map(([t, sans, size]) => <TextBtn key={t} $sans={sans} $size={size}>{t}</TextBtn>)}
        </ToolGroup>
        <Sep />
        <ToolGroup>
          {periods.map((t) => <NumBtn key={t} $on={t === "15"}>{t}</NumBtn>)}
        </ToolGroup>
        <Sep />
      </ToolBar>

      <Workspace>
        <LeftBar>
          {leftTools.map((name) => (
            <SideBtn key={name} $w={30} $on={name === "scales" || name === "dots" || name === "redCross"}>{I[name]}</SideBtn>
          ))}
          <SideBtn $w={30} $mt={5}>{I.clip}</SideBtn>
        </LeftBar>

        <Main>
          <QuoteBar>
            <QuoteDate>03/03/23</QuoteDate>
            <span>O: 4258.000</span>
            <span>4285.000</span>
            <span><QuoteRed>L:</QuoteRed><QuoteValue>4257.000</QuoteValue></span>
            <span>C: 4284.000</span>
            <QuoteRed>-1.000</QuoteRed>
          </QuoteBar>
          <TopRule />

          <PriceRow>
            <ChartPane $h={598}>
              <ChartSvg viewBox="38 115 1764 598" fill="none">
                <path d={priceGridDots} stroke="#d0d0d0" strokeWidth="1" />
                {priceDotY.map((y) => <path key={y} d={`M143 ${y}H1525`} stroke="#d8d8d8" strokeWidth="1" strokeDasharray="1 2" />)}
                {priceLineY.map((y) => <path key={y} d={`M38 ${y}H1802`} stroke="#b8b8b8" strokeWidth="1" />)}
                <path d="M741.5 115V694" stroke="#b80000" strokeWidth="1" />
                <path d="M1145 521H1802V539H1145z" fill="#a6caf0" />
                <path d="M1133 539H1802V557H1133z" fill="#800080" />
                <path d="M1571 521h3v36h-3z" fill="#000" />
                <path d="M38 176.5H1802" stroke="#ffff00" strokeWidth="1" />
                <path d="M38 485.5H1802" stroke="#ff0000" strokeWidth="1.4" />
                <path d="M1676.5 177V713" stroke="#c828c8" strokeWidth="1" />
                <path d={yellowD} stroke="#ffff00" strokeWidth="2" />
                <path d={blueD} stroke="#1414f0" strokeWidth="2" />
                <path d={cyanD} stroke="#00ffff" strokeWidth="1" shapeRendering="crispEdges" />
                <path d="M1114 115h2.5v3h-2.5z" fill="#00ff00" />
                {pivots.map(([x, y], i) => <PivotMark key={i} x={x} y={y + 6}>P</PivotMark>)}
              </ChartSvg>
              <Legend $w={105} $h={116}>
                {legendPrice.map(([a, b, c], i) => <LegendRow key={i} $col={32} $c={c}><span>{a}</span><span>{b}</span></LegendRow>)}
              </Legend>
              <ValueStrip>
                {stripValues.map((v, i) => <StripValue key={i} $now={i === stripValues.length - 1}>{v}</StripValue>)}
              </ValueStrip>
            </ChartPane>
            <AxisPane $h={598}>
              <ChartSvg viewBox="0 0 85 598" fill="none">
                <path d="M1 0V598" stroke="#fff" strokeWidth="2" />
                <path d={tickD} stroke="#fff" strokeWidth="1" />
                {priceAxis.map(([t, y]) => <AxisLabel key={t} x="11" y={y - 115 + 6}>{t}</AxisLabel>)}
              </ChartSvg>
              <PriceTag $top={362}>4087.082</PriceTag>
              <Scales />
            </AxisPane>
          </PriceRow>

          <PaneRule />

          <OscRow>
            <OscColumn>
              <ChartPane $h={289}>
                <ChartSvg viewBox="38 719 1764 289" fill="none">
                  <path d={oscGridDots} stroke="#d0d0d0" strokeWidth="1" />
                  <path d="M72 810.5H1525M72 936.5H1525" stroke="#e0e0e0" strokeWidth="1" strokeDasharray="1 2" />
                  <path d="M38 747.5H1802M38 1000.5H1802" stroke="#c0c0c0" strokeWidth="1" />
                  <path d="M1525 873.5H1802" stroke="#c0c0c0" strokeWidth="1" />
                  <path d={oscD} fill="#ff00ff" />
                  <path d="M741.5 719V1008" stroke="#b80000" strokeWidth="1" />
                  <path d="M741.5 822V873" stroke="#0000ff" strokeWidth="1" />
                  <path d={upD} stroke="#008080" strokeWidth="1" />
                  <path d={dnD} stroke="#008080" strokeWidth="1" />
                </ChartSvg>
                <Legend $w={77} $h={77}>
                  <LegendRow $col={0} $c="#fff"><span /><span>Osc 24,96</span></LegendRow>
                  {legendOsc.map(([a, b, c]) => <LegendRow key={a} $col={39} $c={c}><span>{a}</span><span>{b}</span></LegendRow>)}
                </Legend>
              </ChartPane>
              <TabRow>
                <PageArrow><Ico width="10" height="12" viewBox="0 0 10 12"><path d="M8 1v10L2 6z" fill="#000" /></Ico></PageArrow>
                <PageArrow><Ico width="10" height="12" viewBox="0 0 10 12"><path d="M2 1v10l6-5z" fill="#000" /></Ico></PageArrow>
                {tabs.map(([t, w, ml, on]) => (
                  <Tab key={t} $w={w} $ml={ml} $on={on}>
                    <TabShape viewBox={`0 0 ${w} 19`} preserveAspectRatio="none">
                      <path d={`M.5 0L5 18.5H${w - 5}L${w - 0.5} 0`} fill={on ? "#fff" : "#f0f0f0"} stroke="#222" strokeWidth="1" />
                    </TabShape>
                    <TabLabel>{t}</TabLabel>
                  </Tab>
                ))}
              </TabRow>
            </OscColumn>
            <AxisPane $h={308}>
              <ChartSvg viewBox="0 0 85 308" fill="none">
                <path d="M1 0V308" stroke="#fff" strokeWidth="2" />
                <path d={oscTickD} stroke="#fff" strokeWidth="1" />
                <AxisLabel x="12" y="35">50</AxisLabel>
                <AxisLabel x="12" y="288">-50</AxisLabel>
              </ChartSvg>
              <PriceTag $top={146}>0</PriceTag>
            </AxisPane>
          </OscRow>

          <TimeRow>
            <TimeAxis>
              <TimeCell $w={45} $plain />
              {timesHead.map((t, i) => <TimeCell key={i} $w={48}>{t}</TimeCell>)}
              <TimeCell $w={18}>12</TimeCell>
              <TimeFocus>02/01/23 - 14:15</TimeFocus>
              {timesTail.map((t, i) => <TimeCell key={i} $w={48}>{t}</TimeCell>)}
            </TimeAxis>
            <TimeEnd />
          </TimeRow>
        </Main>

        <RightBar>
          {rightTools.map((name) => <SideBtn key={name} $w={23} $on={name === "bx"}>{I[name]}</SideBtn>)}
          <SideBtn $w={23} $mt={5}>{I.zoom}</SideBtn>
          {rightTools2.map((name) => <SideBtn key={name} $w={23}>{I[name]}</SideBtn>)}
          <SideBtn $w={23} $mt={6} $on>{I.magnet}</SideBtn>
          <RightRule />
        </RightBar>
      </Workspace>

      <StatusBar>
        <StatusMain>For Help, press F1</StatusMain>
        <StatusPane>Page: 2 - STOXX B</StatusPane>
      </StatusBar>
    </Screen>
  );
}
